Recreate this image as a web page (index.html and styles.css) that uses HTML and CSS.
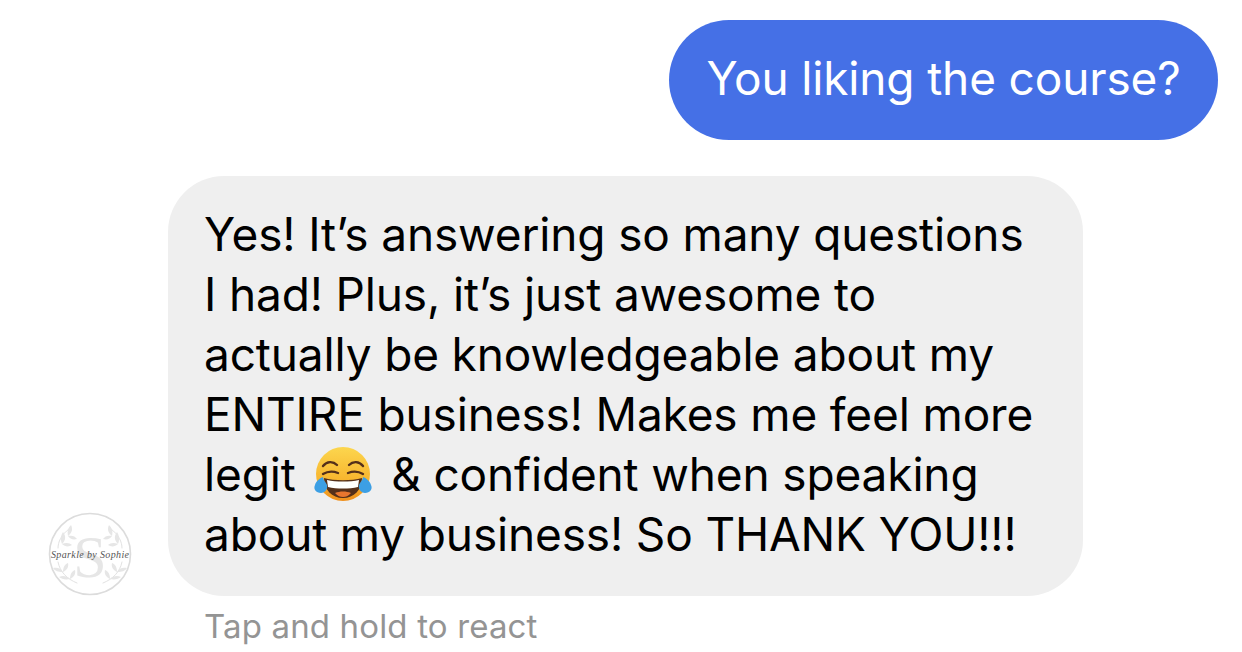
FILE: index.html
```html
<!doctype html>
<html lang="en">
  <head>
    <meta charset="UTF-8" />
    <title>Messages</title>
    <link rel="stylesheet" href="styles.css">
  </head>
  <body>
    <div class="thread">
      <div class="bubble bubble-sent">You liking the course?</div>

      <div class="incoming">
        <svg class="avatar" viewBox="0 0 84 84" aria-hidden="true">
          <circle cx="42" cy="42" r="40.5" fill="#fff" stroke="#dcdcdc" stroke-width="1.6" />
          <g fill="none" stroke="#e2e2e2" stroke-width="1" stroke-linecap="round">
            <path d="M21 17C13 23 10 30 10 36" />
            <path d="M63 17C71 23 74 30 74 36" />
            <path d="M10 50C12 60 19 67 29 71" />
            <path d="M74 50C72 60 65 67 55 71" />
          </g>
          <g fill="#e6e6e6">
            <path d="M20 24c-1-5 0-8 3-11c2 4 1 8-3 11z" />
            <path d="M14 32c-2-5-1-9 1-12c3 4 3 8-1 12z" />
            <path d="M20 24c4-1 7 0 9 3c-4 1-7 0-9-3z" />
            <path d="M14 32c4-2 8-1 10 1c-3 2-7 2-10-1z" />
            <path d="M64 24c1-5 0-8-3-11c-2 4-1 8 3 11z" />
            <path d="M70 32c2-5 1-9-1-12c-3 4-3 8 1 12z" />
            <path d="M64 24c-4-1-7 0-9 3c4 1 7 0 9-3z" />
            <path d="M70 32c-4-2-8-1-10 1c3 2 7 2 10-1z" />
            <path d="M15 60c-5 0-8-1-10-4c4-1 8 0 10 4z" />
            <path d="M22 67c-5 1-8 0-11-2c4-2 8-1 11 2z" />
            <path d="M15 60c0-5 2-8 5-9c1 4-1 7-5 9z" />
            <path d="M22 67c0-5 2-8 5-9c1 4-1 7-5 9z" />
            <path d="M69 60c5 0 8-1 10-4c-4-1-8 0-10 4z" />
            <path d="M62 67c5 1 8 0 11-2c-4-2-8-1-11 2z" />
            <path d="M69 60c0-5-2-8-5-9c-1 4 1 7 5 9z" />
            <path d="M62 67c0-5-2-8-5-9c-1 4 1 7 5 9z" />
          </g>
          <text class="avatar-letter" x="42" y="65" text-anchor="middle">S</text>
          <text class="avatar-name" x="42" y="46" text-anchor="middle" textLength="78">Sparkle by Sophie</text>
        </svg>

        <div class="incoming-body">
          <div class="bubble bubble-received">
            <div>Yes! It’s answering so many questions</div>
            <div>I had! Plus, it’s just awesome to</div>
            <div>actually be knowledgeable about my</div>
            <div>ENTIRE business! Makes me feel more</div>
            <div class="emoji-line">legit
              <svg class="emoji" viewBox="0 0 60 60" aria-hidden="true">
                <defs>
                  <linearGradient id="face" x1="0" y1="0" x2="0" y2="1">
                    <stop offset="0" stop-color="#fcd64e" />
                    <stop offset="0.6" stop-color="#f8b62f" />
                    <stop offset="1" stop-color="#ef8f1c" />
                  </linearGradient>
                </defs>
                <circle cx="30" cy="28" r="27" fill="url(#face)" />
                <path d="M11 32c10 3 28 3 38 0c0 12-8 20-19 20S11 44 11 32z" fill="#55301a" />
                <path d="M14 34c9 2 23 2 32 0l-1 7c-9 2-21 2-30 0z" fill="#fff" />
                <path d="M22 47c5-2 11-2 16 0c-3 3-5 4-8 4s-5-1-8-4z" fill="#e8762f" />
                <path d="M10 20c4-5 10-5 14-1M36 19c4-4 10-4 14 1" fill="none" stroke="#55301a" stroke-width="2.4" stroke-linecap="round" />
                <path d="M10 28c5-3 10-3 15-1M35 27c5-2 10-2 15 1" fill="none" stroke="#55301a" stroke-width="2.4" stroke-linecap="round" />
                <path d="M10 31c0 3 3 5 4 8c1 4-2 8-6 8c-5 0-8-4-6-8c1-4 5-7 8-8z" fill="#3c9fe4" />
                <path d="M50 31c0 3-3 5-4 8c-1 4 2 8 6 8c5 0 8-4 6-8c-1-4-5-7-8-8z" fill="#3c9fe4" />
              </svg>
              &amp; confident when speaking</div>
            <div>about my business! So THANK YOU!!!</div>
          </div>
          <div class="hint">Tap and hold to react</div>
        </div>
      </div>
    </div>
  </body>
</html>
```

FILE: styles.css
```css
html,
body {
  margin: 0;
  height: 100%;
}
body {
  width: 1242px;
  height: 652px;
  overflow: hidden;
  background-color: #fff;
  font-family: "Inter", "Liberation Sans", sans-serif;
  color: #000;
}
.thread {
  display: flex;
  flex-direction: column;
  padding: 20px 24px 0 48px;
  gap: 36px;
}
.bubble {
  box-sizing: border-box;
  font-size: 46px;
  letter-spacing: -0.15px;
  white-space: nowrap;
}
.bubble-sent {
  align-self: flex-end;
  width: 549px;
  height: 120px;
  border-radius: 60px;
  background-color: #4570e6;
  color: #fff;
  line-height: 116px;
  text-align: center;
}
.incoming {
  display: flex;
  align-items: flex-start;
  gap: 36px;
}
.avatar {
  width: 84px;
  height: 84px;
  margin-top: 336px;
  flex: none;
}
.avatar-letter {
  font-family: "Liberation Serif", serif;
  font-size: 60px;
  fill: #e6e6e6;
}
.avatar-name {
  font-family: "Liberation Serif", serif;
  font-style: italic;
  font-size: 10px;
  fill: #555;
}
.bubble-received {
  width: 915px;
  height: 420px;
  padding: 28px 36px;
  border-radius: 56px;
  background-color: #efefef;
  line-height: 60px;
}
.emoji {
  width: 60px;
  height: 60px;
  vertical-align: -9px;
  margin: -6px 5px -6px 5px;
}
.hint {
  margin-top: 11px;
  padding-left: 36px;
  font-size: 33px;
  letter-spacing: 0.15px;
  line-height: 38px;
  color: #949494;
}
```
